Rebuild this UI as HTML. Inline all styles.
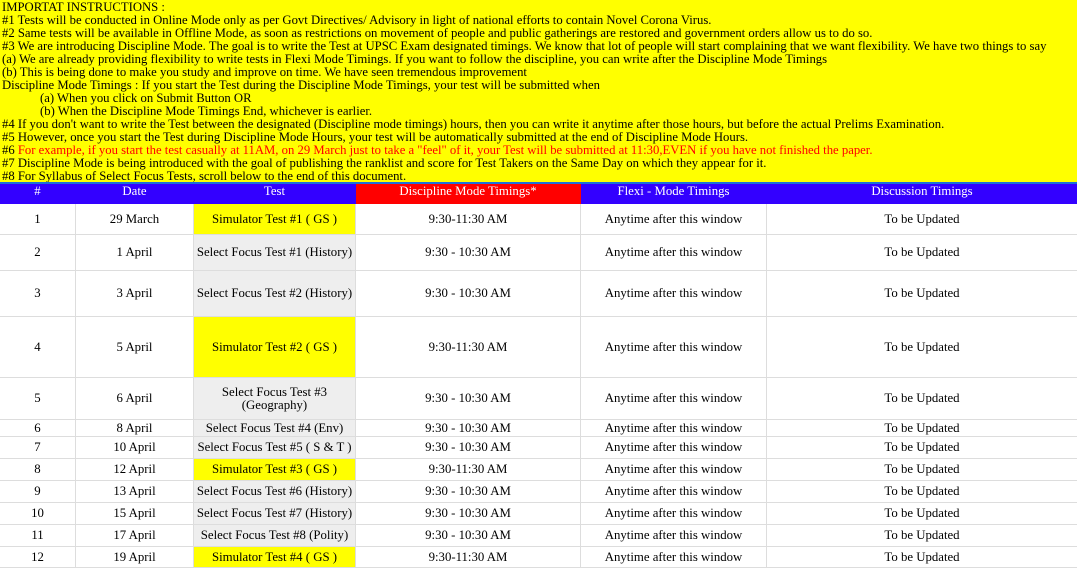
<!DOCTYPE html>
<html><head><meta charset="utf-8"><style>
*{margin:0;padding:0;box-sizing:border-box}
body{width:1077px;height:562px;overflow:hidden;background:#fff;font-family:"Liberation Serif","DejaVu Serif",serif;font-size:12px;color:#000;position:relative}
#ins{position:absolute;left:0;top:0;width:1077px;height:182px;background:#ffff00;padding:1px 0 0 2px;line-height:13px;white-space:nowrap;font-size:12.7px;overflow:hidden}
#ins .r{color:#f00}
#ins .i{padding-left:38px}
#bl{position:absolute;left:0;top:182px;width:1077px;height:2px;background:#1c6fd8}
.c{position:absolute;display:flex;align-items:center;justify-content:center;text-align:center;border-right:1px solid #ddd;border-bottom:1px solid #ddd;line-height:13px;font-size:12.8px;white-space:nowrap}
.h{color:#fff;background:#3300ff;border-color:#3300ff;height:20px;top:184px}
.y{background:#ffff00}
.g{background:#eeeeee}
</style></head><body>
<div id="ins">IMPORTAT INSTRUCTIONS :<br>
#1 Tests will be conducted in Online Mode only as per Govt Directives/ Advisory in light of national efforts to contain Novel Corona Virus.<br>
#2 Same tests will be available in Offline Mode, as soon as restrictions on movement of people and public gatherings are restored and government orders allow us to do so.<br>
#3 We are introducing Discipline Mode. The goal is to write the Test at UPSC Exam designated timings. We know that lot of people will start complaining that we want flexibility. We have two things to say<br>
(a) We are already providing flexibility to write tests in Flexi Mode Timings. If you want to follow the discipline, you can write after the Discipline Mode Timings<br>
(b) This is being done to make you study and improve on time. We have seen tremendous improvement<br>
Discipline Mode Timings : If you start the Test during the Discipline Mode Timings, your test will be submitted when<br>
<div class="i">(a) When you click on Submit Button OR</div>
<div class="i">(b) When the Discipline Mode Timings End, whichever is earlier.</div>
#4 If you don't want to write the Test between the designated (Discipline mode timings) hours, then you can write it anytime after those hours, but before the actual Prelims Examination.<br>
#5 However, once you start the Test during Discipline Mode Hours, your test will be automatically submitted at the end of Discipline Mode Hours.<br>
#6 <span class="r">For example, if you start the test casually at 11AM, on 29 March just to take a "feel" of it, your Test will be submitted at 11:30,EVEN if you have not finished the paper.</span><br>
#7 Discipline Mode is being introduced with the goal of publishing the ranklist and score for Test Takers on the Same Day on which they appear for it.<br>
#8 For Syllabus of Select Focus Tests, scroll below to the end of this document.</div>
<div id="bl"></div>
<div id="t"></div>
<script>
var cols=[0,76,194,356,581,767,1078];
var rows=[204,235,271,317,378,420,437,459,481,503,525,547,568];
var H=["#","Date","Test","Discipline Mode Timings*","Flexi - Mode Timings","Discussion Timings"];
var dates=["29 March","1 April","3 April","5 April","6 April","8 April","10 April","12 April","13 April","15 April","17 April","19 April"];
var tests=["Simulator Test #1 ( GS )","Select Focus Test #1 (History)","Select Focus Test #2 (History)","Simulator Test #2 ( GS )","Select Focus Test #3<br>(Geography)","Select Focus Test #4 (Env)","Select Focus Test #5 ( S &amp; T )","Simulator Test #3 ( GS )","Select Focus Test #6 (History)","Select Focus Test #7 (History)","Select Focus Test #8 (Polity)","Simulator Test #4 ( GS )"];
var h="";
for(var i=0;i<6;i++){h+='<div class="c h" style="left:'+cols[i]+'px;width:'+(cols[i+1]-cols[i])+'px;align-items:flex-start;padding-top:1px'+(i==3?';background:#ff0000;border-color:#ff0000':'')+'">'+H[i]+'</div>';}
for(var r=0;r<12;r++){
 var sim=tests[r].indexOf("Simulator")==0;
 var vals=[r+1,dates[r],tests[r],sim?"9:30-11:30 AM":"9:30 - 10:30 AM","Anytime after this window","To be Updated"];
 for(var i=0;i<6;i++){
  var cls="c"+(i==2?(sim?" y":" g"):"");
  h+='<div class="'+cls+'" style="left:'+cols[i]+'px;top:'+rows[r]+'px;width:'+(cols[i+1]-cols[i])+'px;height:'+(rows[r+1]-rows[r])+'px">'+vals[i]+'</div>';
 }
}
document.getElementById("t").innerHTML=h;
</script>
</body></html>
